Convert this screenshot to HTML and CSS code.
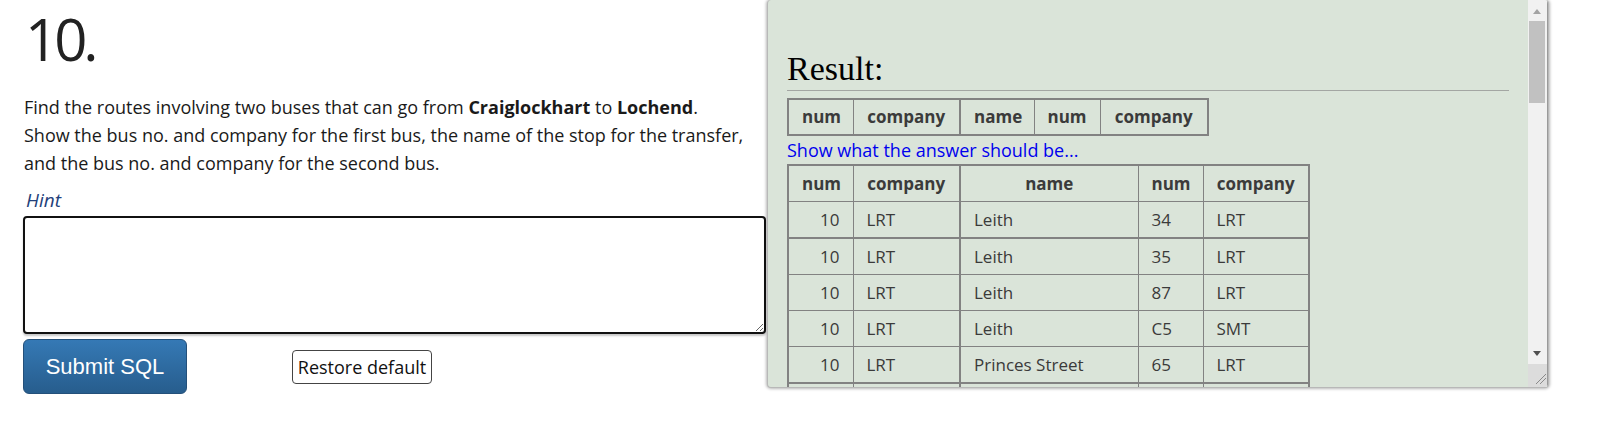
FILE: index.html
```html
<!DOCTYPE html>
<html>
<head>
<meta charset="utf-8">
<title>SQL Zoo - 10</title>
<link rel="stylesheet" href="styles.css">
</head>
<body>
<div class="page">
  <div class="left">
    <h1 class="qnum">10.</h1>
    <p class="question">Find the routes involving two buses that can go from <b>Craiglockhart</b> to <b>Lochend</b>.<br>Show the bus no. and company for the first bus, the name of the stop for the transfer,<br>and the bus no. and company for the second bus.</p>
    <div class="hint">Hint</div>
    <textarea class="sql"></textarea>
    <div class="actions">
      <button class="submit">Submit SQL</button>
      <button class="restore">Restore default</button>
    </div>
  </div>
  <div class="panel">
    <div class="panel-content">
      <h2 class="result-title">Result:</h2>
      <table class="grid grid-top">
        <colgroup><col class="c65"><col class="c107"><col class="c74"><col class="c66"><col class="c108"></colgroup>
        <tr><th>num</th><th>company</th><th class="thick">name</th><th>num</th><th>company</th></tr>
      </table>
      <a class="answer-link" href="#">Show what the answer should be...</a>
      <table class="grid grid-ans">
        <colgroup><col class="c65"><col class="c107"><col class="c178"><col class="c65"><col class="c106"></colgroup>
        <tr><th>num</th><th>company</th><th class="thick">name</th><th>num</th><th>company</th></tr>
        <tr><td class="r">10</td><td>LRT</td><td class="thick">Leith</td><td>34</td><td>LRT</td></tr>
        <tr class="thickrow"><td class="r">10</td><td>LRT</td><td class="thick">Leith</td><td>35</td><td>LRT</td></tr>
        <tr><td class="r">10</td><td>LRT</td><td class="thick">Leith</td><td>87</td><td>LRT</td></tr>
        <tr><td class="r">10</td><td>LRT</td><td class="thick">Leith</td><td>C5</td><td>SMT</td></tr>
        <tr><td class="r">10</td><td>LRT</td><td class="thick">Princes Street</td><td>65</td><td>LRT</td></tr>
        <tr class="thickrow stub"><td></td><td></td><td class="thick"></td><td></td><td></td></tr>
      </table>
    </div>
    <div class="scrollbar">
      <div class="sb-up"></div>
      <div class="sb-thumb"></div>
      <div class="sb-space"></div>
      <div class="sb-down"></div>
      <div class="sb-corner">
        <svg width="20" height="22" viewBox="0 0 20 22"><line x1="8" y1="20" x2="18" y2="10" stroke="#8a8a8a" stroke-width="1"/><line x1="12" y1="20" x2="18" y2="14" stroke="#8a8a8a" stroke-width="1"/></svg>
      </div>
    </div>
  </div>
</div>
</body>
</html>
```

FILE: styles.css
```css
* { box-sizing: border-box; }
html, body { margin: 0; padding: 0; background: #fff; }
body { font-family: "Open Sans", "Noto Sans", sans-serif; color: #222; }

.page { display: flex; align-items: flex-start; }

.left { width: 767px; padding-left: 23px; flex: none; }

.qnum {
  margin: 10px 0 0 2px;
  font-size: 58px;
  line-height: 58px;
  font-weight: 400;
  letter-spacing: -4px;
  color: #222;
}

.question {
  margin: 25px 0 0 1px;
  font-size: 18px;
  line-height: 28px;
  color: #1a1a1a;
}
.question b { font-weight: 700; }

.hint {
  margin-top: 11px;
  margin-left: 3px;
  font-size: 19px;
  line-height: 24px;
  font-style: italic;
  color: #23407a;
}

.sql {
  display: block;
  margin-top: 4px;
  width: 743px;
  height: 118px;
  border: 2px solid #111;
  border-radius: 4px;
  box-shadow: 0 2px 2px rgba(0,0,0,0.22);
  resize: both;
  background: #fff;
}

.actions { display: flex; align-items: center; margin-top: 5px; }

.submit {
  width: 164px;
  height: 55px;
  border: 1px solid #24507a;
  border-radius: 6px;
  background: linear-gradient(#3579b5, #275d8d);
  color: #fff;
  font-family: "Liberation Sans", Arial, sans-serif;
  font-size: 22px;
  padding: 0;
}

.restore {
  margin-left: 105px;
  width: 140px;
  height: 34px;
  border: 1px solid #444;
  border-radius: 4px;
  background: #fff;
  color: #111;
  font-family: "Open Sans", "Noto Sans", sans-serif;
  font-size: 18px;
  padding: 0;
}

.panel {
  flex: none;
  width: 782px;
  height: 388px;
  display: flex;
  background: #dae4d9;
  border: 1px solid #b8b8b8;
  border-top: none;
  border-radius: 4px;
  box-shadow: 0 0 3px 1px rgba(0,0,0,0.28);
  overflow: hidden;
}

.panel-content {
  flex: 1;
  overflow: hidden;
  padding: 49px 19px 0 19px;
}

.result-title {
  margin: 0;
  font-family: "Liberation Serif", "Times New Roman", serif;
  font-weight: 400;
  font-size: 34px;
  line-height: 39px;
  padding-bottom: 2px;
  border-bottom: 1px solid #a3a6a3;
  color: #000;
}

.grid {
  border-collapse: collapse;
  table-layout: fixed;
  font-family: "Open Sans", "Noto Sans", sans-serif;
  font-size: 17px;
  color: #3a3a3a;
  border: 2px solid #828282;
}
.grid th, .grid td {
  border: 1px solid #828282;
  padding: 6px 13px;
  line-height: 23px;
  text-align: left;
  white-space: nowrap;
  overflow: hidden;
}
.grid th { font-weight: 700; text-align: center; color: #3b3b3b; }
.grid td.r { text-align: right; }
.grid .thick { border-left-width: 2px; }
.grid .thickrow td { border-top-width: 2px; }
.grid .stub td { height: 10px; padding: 0; line-height: 10px; border-bottom: none; }
.grid-ans { border-bottom: none; }

.grid-top { margin-top: 7px; width: 420px; }
.grid-top th { padding: 6px 13px; line-height: 22px; }
.grid-ans { margin-top: 2px; width: 521px; }

.c65 { width: 65px; }
.c66 { width: 66px; }
.c74 { width: 74px; }
.c106 { width: 106px; }
.c107 { width: 107px; }
.c108 { width: 108px; }
.c178 { width: 178px; }

.answer-link {
  display: block;
  margin-top: 2px;
  font-size: 18px;
  line-height: 24px;
  color: #0000ee;
  text-decoration: none;
}

.scrollbar {
  flex: none;
  width: 20px;
  background: #f1f1f1;
  display: flex;
  flex-direction: column;
  border-right: 1px solid #9a9a9a;
}
.sb-up {
  height: 21px;
  position: relative;
}
.sb-up::after {
  content: "";
  position: absolute;
  left: 5px;
  top: 9px;
  border-left: 4.5px solid transparent;
  border-right: 4.5px solid transparent;
  border-bottom: 5px solid #a3a3a3;
}
.sb-thumb {
  height: 82px;
  margin: 0 2px 0 1px;
  background: #c1c1c1;
}
.sb-space { flex: 1; }
.sb-down {
  height: 18px;
  position: relative;
}
.sb-down::after {
  content: "";
  position: absolute;
  left: 5px;
  top: 5px;
  border-left: 4.5px solid transparent;
  border-right: 4.5px solid transparent;
  border-top: 5px solid #505050;
}
.sb-corner {
  height: 23px;
  background: #dcdcdc;
}
.sb-corner svg { display: block; }
```
